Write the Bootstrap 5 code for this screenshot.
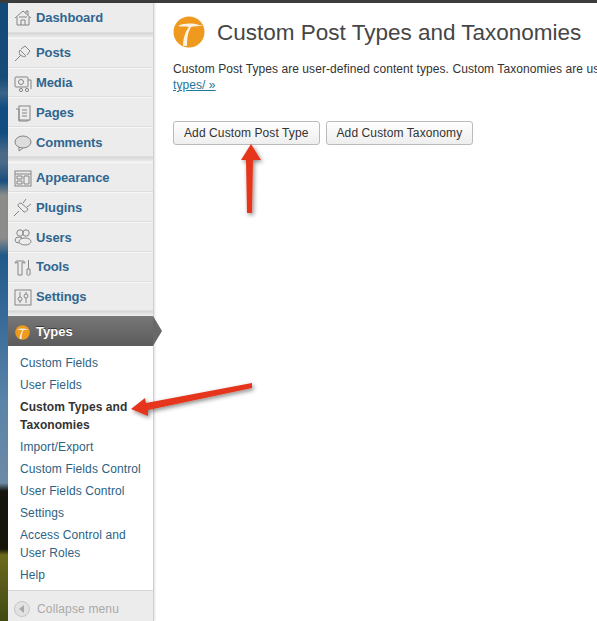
<!DOCTYPE html>
<html lang="en">
<head>
<meta charset="utf-8">
<title>Custom Post Types and Taxonomies</title>
<link rel="stylesheet" href="https://cdn.jsdelivr.net/npm/bootstrap@5.3.0/dist/css/bootstrap.min.css">
<style>
html,body{height:621px;overflow:hidden;background:#fff;}
body{font-family:"Liberation Sans",Arial,sans-serif;position:relative;}
.topline{height:3px;background:#3c3c3c;}
.shell{height:618px;}
.backdrop{width:8px;flex:none;background:linear-gradient(180deg,#134a78 0,#174c79 75px,#3a6488 90px,#114d80 105px,#124d80 130px,#4a6a88 150px,#4a6a88 160px,#1a4f7e 178px,#8c8c8a 192px,#8c8c8a 235px,#205a88 252px,#3a6c9a 320px,#5a84a8 400px,#6d8aa5 480px,#161610 488px,#141408 546px,#6d6a1c 552px,#55591a 585px,#3f4a10 618px);}
.sidebar{width:146px;flex:none;background:#ececec;border-right:1px solid #cfcfcf;box-shadow:1px 0 2px rgba(0,0,0,.12);}
.menu-item{height:30px;padding-left:5px;gap:3px;color:#2f6690;font-weight:700;font-size:13px;letter-spacing:-.1px;border-top:1px solid #f7f7f7;border-bottom:1px solid #dedede;text-decoration:none;padding-top:1px;}
.menu-item svg{width:20px;height:20px;flex:none;fill:none;stroke:#858585;stroke-width:1;}
.gap-rule{height:5px;background:linear-gradient(#d6d6d6,#e4e4e4 60%,#f2f2f2);}
.first-item{border-top:0;}
.types-item{color:#fff;background:linear-gradient(#777,#5b5b5b);border:0;position:relative;text-shadow:0 -1px 0 #333;padding-left:7px;gap:6px;padding-top:2px;letter-spacing:0;}
.types-item::after{content:"";position:absolute;left:100%;top:0;border-style:solid;border-width:15px 0 15px 9px;border-color:transparent transparent transparent #686868;}
.menu-item svg.types-logo{width:15px;height:15px;stroke:none;}
.submenu{background:#fff;padding:6px 0 4px 12px;font-size:12px;line-height:18px;letter-spacing:.1px;}
.submenu a{display:block;color:#2c6283;text-decoration:none;padding:2px 0;}
.submenu a.current{color:#333;font-weight:700;letter-spacing:.05px;}
.collapse-row{height:31px;background:#ececec;border-top:1px solid #d8d8d8;color:#aaa;font-size:12px;padding:6px 0 0 6px;gap:7px;letter-spacing:.15px;}
.collapse-dot{width:16px;height:16px;border-radius:50%;border:1px solid #c6c6c6;background:#e2e2e2;}
.main-pane{min-width:0;padding:11px 0 0 19px;overflow:hidden;}
.page-head{height:36px;gap:12px;}
.page-head h1{font-size:22.5px;font-weight:400;color:#464646;margin:0;white-space:nowrap;}
.head-logo{width:32px;height:32px;flex:none;}
.intro{font-size:12px;line-height:16px;color:#333;margin:11px 0 0;white-space:nowrap;letter-spacing:.07px;}
.intro a{color:#21759b;}
.action-row{gap:6px;margin-top:28px;}
.wp-btn{height:24px;padding:0 10px;font-size:12px;line-height:20px;color:#333;letter-spacing:.1px;background:linear-gradient(#fff,#eee);border:1px solid #bbb;border-radius:3px;white-space:nowrap;}
.arrow-layer{position:absolute;left:0;top:0;width:597px;height:621px;pointer-events:none;}
</style>
</head>
<body>
<div class="topline"></div>
<div class="shell d-flex">
  <div class="backdrop"></div>
  <nav class="sidebar d-flex flex-column">
    <a class="menu-item first-item d-flex align-items-center" href="#"><svg viewBox="0 0 20 20"><path d="M2 10 10 3l8 7M4 9v8h12V9M8 17v-5h4v5M13 5V3h2v4M6 9h8"/></svg>Dashboard</a>
    <div class="gap-rule"></div>
    <a class="menu-item d-flex align-items-center" href="#"><svg viewBox="0 0 20 20"><path d="M2 18 8 12M7 7l6 6M8 6l4-3 5 5-3 4M7 7c-1 1-1 3 0 5l2 1c2 1 3 1 4 0"/></svg>Posts</a>
    <a class="menu-item d-flex align-items-center" href="#"><svg viewBox="0 0 20 20"><rect x="2" y="4" width="13" height="10" rx="1"/><circle cx="8" cy="9" r="2.5"/><path d="M15 7h3v6M18 13v3"/><circle cx="8" cy="17" r="1.6"/><circle cx="14" cy="17" r="1.6"/></svg>Media</a>
    <a class="menu-item d-flex align-items-center" href="#"><svg viewBox="0 0 20 20"><path d="M3 6h3v12h9v-1"/><rect x="6" y="3" width="11" height="14"/><path d="M9 7h5M9 10h5M9 13h5"/></svg>Pages</a>
    <a class="menu-item d-flex align-items-center" href="#"><svg viewBox="0 0 20 20"><ellipse cx="10" cy="9" rx="8" ry="6" fill="#ddd"/><path d="M6 14v4l4-3"/></svg>Comments</a>
    <div class="gap-rule"></div>
    <a class="menu-item d-flex align-items-center" href="#"><svg viewBox="0 0 20 20"><rect x="2" y="3" width="16" height="15"/><path d="M2 6h16M4 8h5v3H4zM4 13h5v3H4zM11 8h5v8h-5z"/></svg>Appearance</a>
    <a class="menu-item d-flex align-items-center" href="#"><svg viewBox="0 0 20 20"><path d="M1 19 6 14M5 9l6 6c2 0 3-1 4-3l-7-6C6 6 5 7 5 9ZM10 6l3-4M14 10l4-3"/></svg>Plugins</a>
    <a class="menu-item d-flex align-items-center" href="#"><svg viewBox="0 0 20 20"><circle cx="7" cy="6" r="3.2"/><circle cx="13" cy="6" r="3.2"/><ellipse cx="6" cy="13" rx="4" ry="3"/><ellipse cx="12" cy="14.5" rx="6" ry="3.5" fill="#ececec"/></svg>Users</a>
    <a class="menu-item d-flex align-items-center" href="#"><svg viewBox="0 0 20 20"><path d="M2 6c0-1 1-2 2-2h6c1 0 2 1 2 2l-3-.5V18H5V5.500Z"/><path d="M14 12h3v5.500c0 1-3 1-3 0ZM15.500 12V3"/></svg>Tools</a>
    <a class="menu-item d-flex align-items-center" href="#"><svg viewBox="0 0 20 20"><rect x="2" y="3" width="16" height="15"/><path d="M7 5v5M7 14v2M13 5v2M13 11v5"/><circle cx="7" cy="12" r="2"/><circle cx="13" cy="9" r="2"/></svg>Settings</a>
    <div class="gap-rule"></div>
    <a class="menu-item types-item d-flex align-items-center" href="#">
      <svg class="types-logo" viewBox="0 0 32 32"><circle cx="16" cy="16" r="15.5" fill="#ee9a1e"/><path d="M5 10c6-3 14-3 21-1l4 1c-5 0-9 0-12 1-3 5-4 11-4 19h-4c0-7 2-14 6-19-4-1-8 0-11-1Z" fill="#fdf0d8"/></svg>
      Types</a>
    <div class="submenu flex-grow-1">
      <a href="#">Custom Fields</a>
      <a href="#">User Fields</a>
      <a href="#" class="current">Custom Types and Taxonomies</a>
      <a href="#">Import/Export</a>
      <a href="#">Custom Fields Control</a>
      <a href="#">User Fields Control</a>
      <a href="#">Settings</a>
      <a href="#">Access Control and User Roles</a>
      <a href="#">Help</a>
    </div>
    <div class="collapse-row d-flex align-items-center">
      <span class="collapse-dot d-flex align-items-center justify-content-center"><svg width="8" height="8" viewBox="0 0 8 8"><path d="M6 0v8L1 4Z" fill="#a8a8a8"/></svg></span>
      Collapse menu
    </div>
  </nav>
  <main class="main-pane flex-grow-1">
    <div class="page-head d-flex align-items-center">
      <svg class="head-logo" viewBox="0 0 32 32"><circle cx="16" cy="16" r="15.5" fill="#ef9a1f"/><path d="M5 10c6-3 14-3 21-1l4 1c-5 0-9 0-12 1-3 5-4 11-4 19h-4c0-7 2-14 6-19-4-1-8 0-11-1Z" fill="#fdf3e2"/></svg>
      <h1>Custom Post Types and Taxonomies</h1>
    </div>
    <p class="intro">Custom Post Types are user-defined content types. Custom Taxonomies are user-defined<br><a href="#">types/ »</a></p>
    <div class="action-row d-flex">
      <button class="wp-btn" type="button">Add Custom Post Type</button>
      <button class="wp-btn" type="button">Add Custom Taxonomy</button>
    </div>
  </main>
</div>
<svg class="arrow-layer" viewBox="0 0 597 621" aria-hidden="true">
  <defs><filter id="soft" x="-30%" y="-30%" width="160%" height="160%"><feDropShadow dx="1.5" dy="2" stdDeviation="2.2" flood-color="#000" flood-opacity=".45"/></filter></defs>
  <g fill="#e5341a" filter="url(#soft)">
    <path d="M251 144 261 160H253L252 213H247L246 160H241Z"/>
    <path d="M131 409 145 398 146 403 252 383 252 388 148 410 148 416Z"/>
  </g>
</svg>
<script src="https://cdn.jsdelivr.net/npm/bootstrap@5.3.0/dist/js/bootstrap.bundle.min.js"></script>
</body>
</html>
